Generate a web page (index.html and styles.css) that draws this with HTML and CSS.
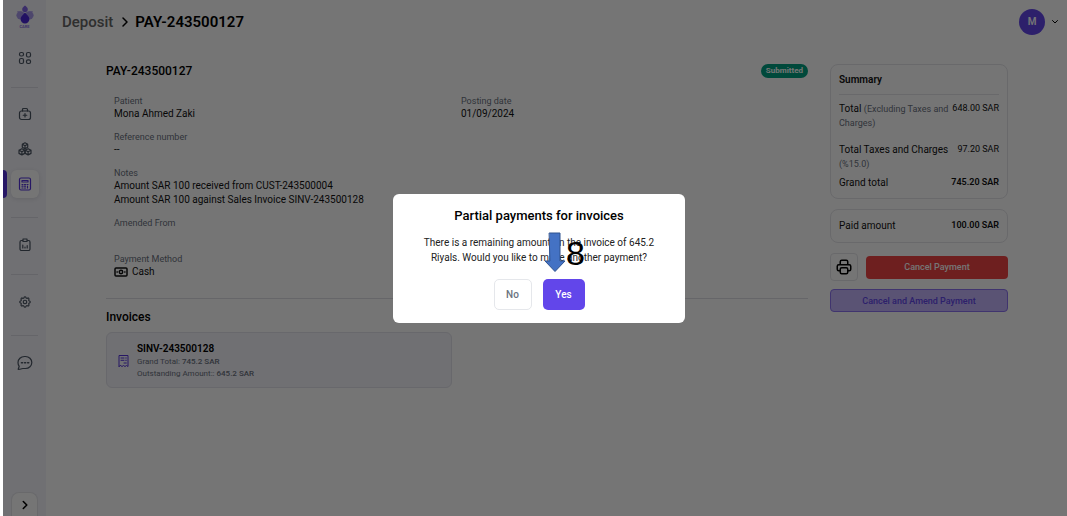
FILE: index.html
```html
<!DOCTYPE html>
<html lang="en">
<head>
<meta charset="utf-8">
<meta name="viewport" content="width=device-width, initial-scale=1">
<title>Deposit PAY-243500127</title>
<link rel="stylesheet" href="styles.css">
</head>
<body>
<div class="app">
  <nav class="sidebar" aria-label="Main">
    <a class="logo" href="#" aria-label="Care home">
      <svg viewBox="0 0 18 19" width="18" height="19"><path d="M9 .5c1.200 1.200 2.800 2 2.800 3.700a2.800 2.800 0 0 1-5.600 0C6.200 2.500 7.800 1.700 9 .5z" fill="#8265e8"/><ellipse cx="4.800" cy="10.300" rx="4.400" ry="4.100" fill="#a99aec"/><ellipse cx="13.200" cy="10.300" rx="4.400" ry="4.100" fill="#a99aec"/><path d="M1 6.500c3-.6 6 .5 7.500 3L5 12zM17 6.500c-3-.6-6 .5-7.500 3L13 12z" fill="#a99aec"/><path d="M9 7.500c2 2.500 4.400 3.900 4.400 6.600a4.400 4.400 0 0 1-8.800 0c0-2.700 2.400-4.100 4.400-6.600z" fill="#4b26d8"/></svg>
      <span class="logo-text">CARE</span>
    </a>
    <div class="nav-group first">
      <a class="nav-item" href="#" aria-label="Dashboard"><svg class="icon" viewBox="0 0 14 14"><rect x="1.500" y="1.500" width="4" height="3.500" rx="1.500"/><rect x="8.500" y="1.500" width="4" height="4.500" rx="1.500"/><rect x="1.500" y="7.500" width="4" height="5" rx="1.500"/><rect x="8.500" y="8.800" width="4" height="3.700" rx="1.500"/></svg></a>
    </div>
    <div class="nav-group sections">
      <a class="nav-item" href="#" aria-label="Clinic"><svg class="icon" viewBox="0 0 14 14"><rect x="1.500" y="4" width="11" height="8.500" rx="2"/><path d="M4.500 4V2.500a1 1 0 0 1 1-1h3a1 1 0 0 1 1 1V4M7 6.500v3.500M5.250 8.250h3.500"/></svg></a>
      <a class="nav-item" href="#" aria-label="Inventory"><svg class="icon" viewBox="0 0 14 14"><path d="M7 .8 9.700 2.200v3.100L7 6.800 4.300 5.300V2.200zM4.300 2.200 7 3.700l2.700-1.500M7 3.700v3.100M3.900 6.700 6.700 8.200v3.200L3.900 12.900 1 11.400V8.200zM1 8.200l2.900 1.500 2.800-1.500M3.900 9.700v3.200M10.100 6.700 13 8.200v3.200l-2.900 1.500-2.800-1.500V8.200zM7.300 8.200l2.800 1.500L13 8.200M10.100 9.700v3.200"/></svg></a>
      <a class="nav-item active" href="#" aria-label="Accounting" aria-current="page"><svg class="icon" viewBox="0 0 14 14"><rect x="1.500" y="1" width="11" height="12" rx="1.500"/><rect x="4" y="3.500" width="6" height="1.500"/><path d="M4 7.500h1M6.500 7.500h1M9 7.500h1M4 9.200h1M6.500 9.200h1M4 11h1M6.500 11h1M9.500 9v2"/></svg></a>
    </div>
    <div class="nav-group reports">
      <a class="nav-item" href="#" aria-label="Reports"><svg class="icon" viewBox="0 0 14 14"><path d="M4.500 2.500h-1a1.500 1.500 0 0 0-1.500 1.500v7a1.500 1.500 0 0 0 1.500 1.500h7A1.500 1.500 0 0 0 12 11V4a1.500 1.500 0 0 0-1.500-1.500h-1M5 1h4v2.500H5zM4.800 7v3M7 9v1M9.200 7.700V10"/></svg></a>
    </div>
    <div class="nav-group">
      <a class="nav-item" href="#" aria-label="Settings"><svg class="icon gear" viewBox="0 0 24 24"><path d="M10.325 4.317c.426-1.756 2.924-1.756 3.350 0a1.724 1.724 0 0 0 2.573 1.066c1.543-.94 3.310.826 2.370 2.370a1.724 1.724 0 0 0 1.065 2.572c1.756.426 1.756 2.924 0 3.350a1.724 1.724 0 0 0-1.066 2.573c.94 1.543-.826 3.310-2.370 2.370a1.724 1.724 0 0 0-2.572 1.065c-.426 1.756-2.924 1.756-3.350 0a1.724 1.724 0 0 0-2.573-1.066c-1.543.94-3.310-.826-2.370-2.370a1.724 1.724 0 0 0-1.065-2.572c-1.756-.426-1.756-2.924 0-3.350a1.724 1.724 0 0 0 1.066-2.573c-.94-1.543.826-3.310 2.370-2.370 1 .608 2.296.070 2.572-1.065z"/><circle cx="12" cy="12" r="3"/></svg></a>
    </div>
    <div class="nav-group">
      <a class="nav-item" href="#" aria-label="Messages"><svg class="icon chat" viewBox="0 0 16 16"><path d="M1.200 14.300l1-3A6 6 0 0 1 1 7.600a6.500 6 0 0 1 6.500-6.100h1a6.300 6 0 0 1 0 12H6.200c-1-.2-2 .8-5 .8z"/><path d="M4.500 7.700h1M7.600 7.700h1M10.700 7.700h1" stroke-width="1.600"/></svg></a>
    </div>
    <button class="expand" type="button" aria-label="Expand sidebar"><svg class="icon" viewBox="0 0 14 14"><path d="m5.300 3.500 3.500 3.500-3.500 3.500" stroke-width="1.600"/></svg></button>
  </nav>

  <div class="page">
    <header class="topbar">
      <h1 class="crumbs"><a href="#">Deposit</a><svg class="crumb-arrow" viewBox="0 0 8 12"><path d="m2 2 4 4-4 4"/></svg><span>PAY-243500127</span></h1>
      <button class="account" type="button" aria-label="Account"><span class="avatar">M</span><svg class="caret" viewBox="0 0 8 8"><path d="m1.500 2.500 2.500 2.500 2.500-2.500"/></svg></button>
    </header>
    <main class="content">
      <section class="details">
        <div class="title-row"><h2>PAY-243500127</h2><span class="badge">Submitted</span></div>
        <dl class="fields">
          <div class="field"><dt>Patient</dt><dd>Mona Ahmed Zaki</dd></div>
          <div class="field"><dt>Posting date</dt><dd>01/09/2024</dd></div>
          <div class="field wide"><dt>Reference number</dt><dd>--</dd></div>
          <div class="field wide"><dt>Notes</dt><dd>Amount SAR 100 received from CUST-243500004<br>Amount SAR 100 against Sales Invoice SINV-243500128</dd></div>
          <div class="field wide"><dt>Amended From</dt><dd></dd></div>
          <div class="field wide"><dt>Payment Method</dt><dd class="method"><svg viewBox="0 0 14 10"><rect x="1" y="1" width="12" height="8" rx="1"/><circle cx="7" cy="5" r="1.700"/><path d="M3 5h.3M10.700 5h.3"/></svg>Cash</dd></div>
        </dl>
        <div class="invoices">
          <h2>Invoices</h2>
          <a class="invoice" href="#">
            <svg viewBox="0 0 12 14"><path d="M1.500 12.500v-11h9v11l-1.500-1-1.500 1-1.500-1-1.500 1-1.500-1z"/><path d="M3.500 4h3M3.500 6.300h3M8.200 4h.6M8.200 6.300h.6M6.500 9h2.300"/></svg>
            <span class="invoice-body"><strong>SINV-243500128</strong><span>Grand Total: <b>745.2 SAR</b></span><span>Outstanding Amount:: <b>645.2 SAR</b></span></span>
          </a>
        </div>
      </section>
      <aside class="side">
        <section class="card summary">
          <h2>Summary</h2>
          <div class="line tall"><span class="name">Total <small>(Excluding Taxes and Charges)</small></span><span class="amount">648.00 SAR</span></div>
          <div class="line"><span class="name">Total Taxes and Charges <small>(%15.0)</small></span><span class="amount">97.20 SAR</span></div>
          <div class="line"><span class="name">Grand total</span><strong class="amount">745.20 SAR</strong></div>
        </section>
        <section class="card paid"><div class="line"><span class="name">Paid amount</span><strong class="amount">100.00 SAR</strong></div></section>
        <div class="buttons">
          <div class="actions">
            <button class="print" type="button" aria-label="Print"><svg viewBox="0 0 24 24"><path d="M17 17h2a2 2 0 0 0 2-2v-4a2 2 0 0 0-2-2H5a2 2 0 0 0-2 2v4a2 2 0 0 0 2 2h2M17 9V5a2 2 0 0 0-2-2H9a2 2 0 0 0-2 2v4"/><rect x="7" y="13" width="10" height="8" rx="2"/></svg></button>
            <button class="cancel" type="button">Cancel Payment</button>
          </div>
          <button class="amend" type="button">Cancel and Amend Payment</button>
        </div>
      </aside>
    </main>
  </div>
</div>

<div class="overlay">
  <div class="dialog" role="dialog" aria-modal="true" aria-labelledby="dialog-title">
    <h2 id="dialog-title">Partial payments for invoices</h2>
    <p>There is a remaining amount on the invoice of 645.2 Riyals. Would you like to make another payment?</p>
    <div class="dialog-actions"><button class="no" type="button">No</button><button class="yes" type="button">Yes</button></div>
    <div class="step"><svg viewBox="0 0 22 41"><path d="M5.500 1h10.500v28h5L11 39.500 1 29h4.500z"/></svg><span>8</span></div>
  </div>
</div>
</body>
</html>
```
FILE: styles.css
```css
* { box-sizing: border-box; }
body { margin: 0; padding-left: 3px; background: #fff; color: #111; font: 10px/14px Roboto, "Noto Sans", sans-serif; }
h1, h2, p, dl, dd { margin: 0; }
a { color: inherit; text-decoration: none; }
button { font: inherit; padding: 0; border: 0; background: none; }
svg { fill: none; stroke: currentColor; stroke-linecap: round; stroke-linejoin: round; flex: none; }

.app { display: flex; min-height: 100vh; }
.sidebar { position: relative; width: 43px; flex: none; display: flex; flex-direction: column; align-items: center; background: #f3f3fa; color: #4b5563; }
.logo { display: flex; flex-direction: column; align-items: center; padding-top: 5px; }
.logo svg { stroke: none; }
.logo-text { font-size: 4px; line-height: 5px; font-weight: 700; color: #8b76e6; }
.nav-group { width: 27px; display: flex; flex-direction: column; align-items: center; gap: 7px; padding: 13px 0 19px; border-top: 1px solid #dcdce4; }
.nav-group.first { border: 0; padding: 15px 0; }
.nav-group.sections { padding-top: 12px; }
.nav-group.reports { padding-bottom: 15px; }
.nav-item { width: 28px; height: 28px; display: grid; place-items: center; }
.icon { width: 14px; height: 14px; stroke-width: 1.2; }
.icon.gear { stroke-width: 2; }
.icon.chat { width: 16px; height: 16px; }
.nav-item.active { color: #5534dc; background: #fff; border-radius: 6px; box-shadow: 0 1px 4px #0000001a; }
.nav-item.active::before { content: ""; position: absolute; left: 0; width: 4px; height: 28px; background: #5534dc; border-radius: 0 4px 4px 0; }
.expand { margin-top: auto; width: 27px; height: 24px; color: #000; background: #fff; border: 1px solid #e5e5ea; border-bottom: 0; border-radius: 8px 8px 0 0; display: grid; place-items: center; }

.page { flex: 1; min-width: 0; }
.topbar { height: 43px; display: flex; align-items: center; justify-content: space-between; padding: 0 8px 0 16px; }
.crumbs { display: flex; align-items: center; gap: 8px; font-size: 15px; line-height: 18px; font-weight: 600; color: #000; }
.crumbs a { color: #666; font-weight: 500; }
.crumb-arrow { width: 8px; height: 12px; stroke-width: 1.5; margin-right: -2px; }
.account { display: flex; align-items: center; gap: 6px; }
.avatar { width: 26px; height: 26px; border-radius: 50%; background: #6246ea; color: #fff; display: grid; place-items: center; font-weight: 600; }
.caret { width: 8px; height: 8px; }

.content { display: grid; grid-template-columns: minmax(0, 1fr) 178px; gap: 22px; padding: 21px 59px 24px 60px; align-items: start; }
.title-row { display: flex; align-items: center; justify-content: space-between; height: 14px; }
.details h2 { font-size: 12px; line-height: 14px; font-weight: 500; color: #000; }
.badge { font-size: 8px; line-height: 14px; font-weight: 700; color: #fff; background: #009f80; border-radius: 7px; padding: 0 5px; }
.fields { display: grid; grid-template-columns: 1fr 1fr; gap: 10px 0; padding: 17px 0 19px 8px; border-bottom: 1px solid #dedee4; }
.wide { grid-column: 1 / -1; }
.field dt { font-size: 9px; line-height: 12px; color: #6b7280; }
.field dd { min-height: 14px; }
.method { display: flex; align-items: center; gap: 4px; }
.method svg { width: 14px; height: 10px; stroke-width: 1.5; }
.invoices { display: grid; gap: 8px; padding-top: 11px; }
.invoice { width: 346px; max-width: 100%; display: flex; align-items: center; gap: 7px; padding: 8px 10px 7px; border: 1px solid #e3e3eb; border-radius: 6px; background: #f3f3fa; }
.invoice svg { width: 13px; height: 14px; color: #5534dc; }
.invoice-body { display: grid; font-size: 8px; line-height: 12px; color: #6b7280; }
.invoice-body strong { font-size: 10px; line-height: 15px; font-weight: 600; color: #000; }
.invoice-body b { font-weight: 500; }

.side { display: grid; gap: 10px; }
.card { border: 1px solid #e5e5ea; border-radius: 8px; padding: 8px; }
.summary h2 { font-size: 10px; line-height: 14px; font-weight: 600; padding-bottom: 7px; border-bottom: 1px solid #e5e5ea; }
.line { display: flex; justify-content: space-between; gap: 4px; padding-top: 5px; }
.line.tall { padding: 7px 0 8px; }
.name small { font-size: 9px; color: #6b7280; }
.amount { font-size: 9px; line-height: 12px; white-space: nowrap; }
strong.amount { font-weight: 600; }
.paid .line { padding: 1px 0; }
.buttons { display: grid; gap: 8px; }
.actions { display: flex; align-items: center; gap: 8px; }
.print { width: 28px; height: 28px; border: 1px solid #e5e5ea; border-radius: 4px; display: grid; place-items: center; color: #000; }
.print svg { width: 18px; height: 18px; stroke-width: 2; }
.cancel { flex: 1; height: 23px; border-radius: 4px; background: #f04444; color: #fff; font-size: 9px; font-weight: 500; }
.amend { height: 23px; border: 1px solid #8b72f0; border-radius: 4px; background: #c4b5fd; color: #6246ea; font-size: 9px; font-weight: 500; }

.overlay { position: fixed; inset: 0 0 0 3px; display: grid; place-items: center; padding: 1px 0 0 8px; background: rgba(0, 0, 0, .54); }
.dialog { position: relative; width: 292px; max-width: 90%; padding: 14px 24px 13px; border-radius: 6px; background: #fff; text-align: center; }
.dialog h2 { font-size: 13px; line-height: 16px; font-weight: 500; color: #000; }
.dialog p { padding: 11px 0 14px; line-height: 15px; color: #222; }
.dialog-actions { display: flex; justify-content: center; gap: 11px; }
.dialog-actions button { height: 31px; border-radius: 5px; font-weight: 500; }
.dialog-actions .no { width: 38px; border: 1px solid #e5e7eb; color: #6b7280; }
.dialog-actions .yes { width: 42px; background: #6246ea; color: #fff; }
.step { position: absolute; left: 151px; top: 38px; display: flex; align-items: center; color: #000; }
.step svg { width: 22px; height: 41px; fill: #4472c4; stroke: #2f528f; stroke-linejoin: miter; }
.step span { font: 34px/40px "Liberation Sans", Arial, sans-serif; }
```
